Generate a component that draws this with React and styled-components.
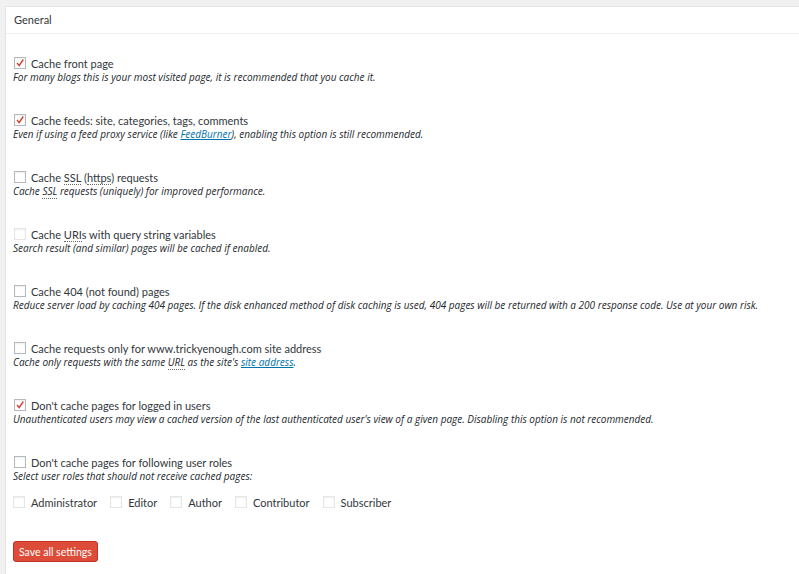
import styled, { createGlobalStyle } from "styled-components"

const Global = createGlobalStyle`
  body {
    margin: 0;
    background: #f1f1f1;
    font-family: Lato, "Open Sans", sans-serif;
    color: #32373c;
  }
`
const Panel = styled.div`
  margin: 6px 0 0 5px;
  background: #fff;
  border: 1px solid #e5e5e5;
  border-right: none;
  min-height: 567px;
`
const Header = styled.div`
  height: 26px;
  line-height: 26px;
  padding-left: 8px;
  font-size: 11px;
  border-bottom: 1px solid #eee;
`
const Body = styled.div`
  padding: 21px 0 0 7px;
`
const Item = styled.div`
  margin-bottom: 28px;
`
const Row = styled.label`
  display: flex;
  align-items: center;
  gap: 5px;
  height: 16px;
  font-size: 11px;
  padding-left: 1px;
`
const Box = styled.span`
  box-sizing: border-box;
  width: 12px;
  height: 12px;
  border: 1px solid ${p => (p.$faded ? "#e6e6e6" : "#b4b9be")};
  background: #fff;
  box-shadow: inset 0 1px 2px rgba(0, 0, 0, 0.07);
  display: flex;
  align-items: center;
  justify-content: center;
  flex-shrink: 0;
`
const Desc = styled.div`
  font-family: "Open Sans", sans-serif;
  font-size: 10px;
  font-style: italic;
  height: 13px;
  line-height: 13px;
  color: #23282d;
`
const Abbr = styled.span`
  border-bottom: 1px dotted #666;
`
const Link = styled.a`
  color: #0073aa;
  text-decoration: underline;
`
const Roles = styled.div`
  display: flex;
  gap: 13px;
  margin-top: 11px;
`
const Role = styled(Row)`
  gap: 6px;
  padding-left: 0;
`
const Button = styled.button`
  margin-top: 31px;
  height: 21px;
  padding: 0 5px;
  background: #dd4b39;
  border: 1px solid #c23321;
  border-radius: 3px;
  color: #fff;
  font-family: inherit;
  font-size: 10.5px;
`

const Check = ({ on, faded }) => (
  <Box $faded={faded}>
    {on && (
      <svg width="10" height="10" viewBox="0 0 10 10">
        <path d="M2 5 L4.2 7.5 L8.3 1.5" fill="none" stroke="#d0443a" strokeWidth="1.4" />
      </svg>
    )}
  </Box>
)

const items = [
  {
    on: true,
    label: "Cache front page",
    desc: "For many blogs this is your most visited page, it is recommended that you cache it.",
  },
  {
    on: true,
    label: "Cache feeds: site, categories, tags, comments",
    desc: (
      <>
        Even if using a feed proxy service (like <Link href="#">FeedBurner</Link>), enabling this option is still recommended.
      </>
    ),
  },
  {
    label: (
      <>
        Cache <Abbr>SSL</Abbr> (<Abbr>https</Abbr>) requests
      </>
    ),
    desc: (
      <>
        Cache <Abbr>SSL</Abbr> requests (uniquely) for improved performance.
      </>
    ),
  },
  {
    faded: true,
    label: (
      <>
        Cache <Abbr>URI</Abbr>s with query string variables
      </>
    ),
    desc: "Search result (and similar) pages will be cached if enabled.",
  },
  {
    label: "Cache 404 (not found) pages",
    desc: "Reduce server load by caching 404 pages. If the disk enhanced method of disk caching is used, 404 pages will be returned with a 200 response code. Use at your own risk.",
  },
  {
    label: "Cache requests only for www.trickyenough.com site address",
    desc: (
      <>
        Cache only requests with the same <Abbr>URL</Abbr> as the site's <Link href="#">site address</Link>.
      </>
    ),
  },
  {
    on: true,
    label: "Don't cache pages for logged in users",
    desc: "Unauthenticated users may view a cached version of the last authenticated user's view of a given page. Disabling this option is not recommended.",
  },
]

const roles = ["Administrator", "Editor", "Author", "Contributor", "Subscriber"]

const App = () => (
  <>
    <Global />
    <Panel>
      <Header>General</Header>
      <Body>
        {items.map((it, i) => (
          <Item key={i}>
            <Row>
              <Check on={it.on} faded={it.faded} />
              <span>{it.label}</span>
            </Row>
            <Desc>{it.desc}</Desc>
          </Item>
        ))}
        <Row>
          <Check />
          <span>Don't cache pages for following user roles</span>
        </Row>
        <Desc>Select user roles that should not receive cached pages:</Desc>
        <Roles>
          {roles.map(r => (
            <Role key={r}>
              <Check faded />
              <span>{r}</span>
            </Role>
          ))}
        </Roles>
        <Button>Save all settings</Button>
      </Body>
    </Panel>
  </>
)

export default App
